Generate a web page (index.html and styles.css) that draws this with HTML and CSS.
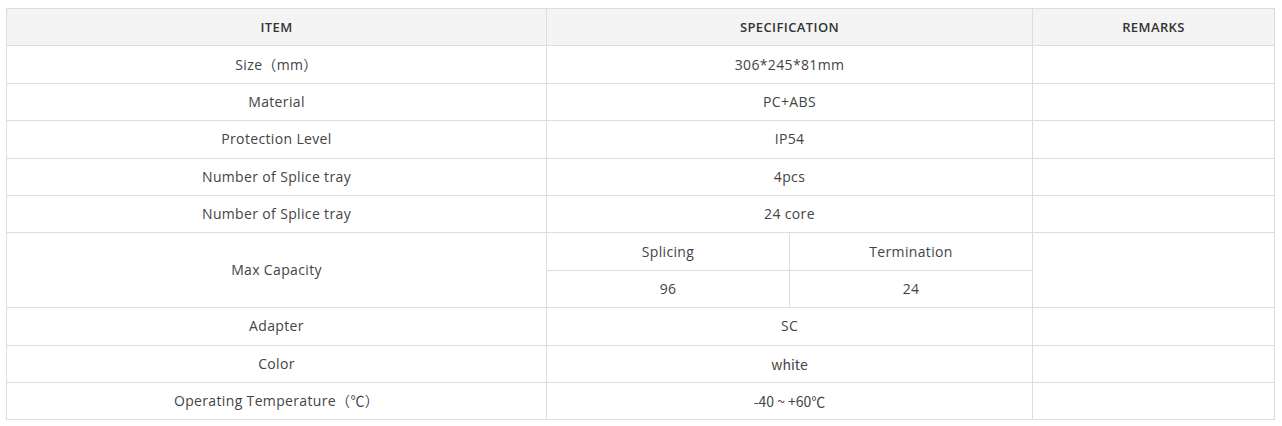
FILE: index.html
```html
<!DOCTYPE html>
<html>
<head>
<meta charset="utf-8">
<link rel="stylesheet" href="styles.css">
</head>
<body>
<table class="spec">
  <colgroup>
    <col class="c-item">
    <col class="c-sub">
    <col class="c-sub">
    <col class="c-rem">
  </colgroup>
  <thead>
    <tr><th>ITEM</th><th colspan="2">SPECIFICATION</th><th>REMARKS</th></tr>
  </thead>
  <tbody>
    <tr><td>Size（mm）</td><td colspan="2">306*245*81mm</td><td></td></tr>
    <tr><td>Material</td><td colspan="2">PC+ABS</td><td></td></tr>
    <tr><td>Protection Level</td><td colspan="2">IP54</td><td></td></tr>
    <tr><td>Number of Splice tray</td><td colspan="2">4pcs</td><td></td></tr>
    <tr><td>Number of Splice tray</td><td colspan="2">24 core</td><td></td></tr>
    <tr><td rowspan="2">Max Capacity</td><td>Splicing</td><td>Termination</td><td rowspan="2"></td></tr>
    <tr><td>96</td><td>24</td></tr>
    <tr><td>Adapter</td><td colspan="2">SC</td><td></td></tr>
    <tr><td>Color</td><td colspan="2" class="alt">white</td><td></td></tr>
    <tr><td>Operating Temperature（℃）</td><td colspan="2" class="alt">-40 ~ +60℃</td><td></td></tr>
  </tbody>
</table>
</body>
</html>
```
FILE: styles.css
```css
html, body {
  margin: 0;
  padding: 0;
  background: #fff;
}
body {
  padding: 8px 0 0 6px;
  font-family: "Open Sans", "Noto Sans CJK SC", sans-serif;
  color: #444;
}
.spec {
  border-collapse: collapse;
  table-layout: fixed;
  width: 1268px;
  font-size: 14px;
  letter-spacing: 0.35px;
}
.c-item { width: 540px; }
.c-sub { width: 243px; }
.c-rem { width: 242px; }
.spec th, .spec td {
  border: 1px solid #dddddd;
  text-align: center;
  vertical-align: middle;
  padding: 0 4px;
  height: 37.4px;
  box-sizing: border-box;
  line-height: 20px;
}
.spec th {
  background: #f4f4f4;
  color: #333;
  font-weight: 600;
  font-size: 13px;
  letter-spacing: 0.4px;
}
.spec .alt {
  font-family: "Noto Sans CJK SC", sans-serif;
  font-size: 14px;
  letter-spacing: 0;
  color: #444;
}
```
